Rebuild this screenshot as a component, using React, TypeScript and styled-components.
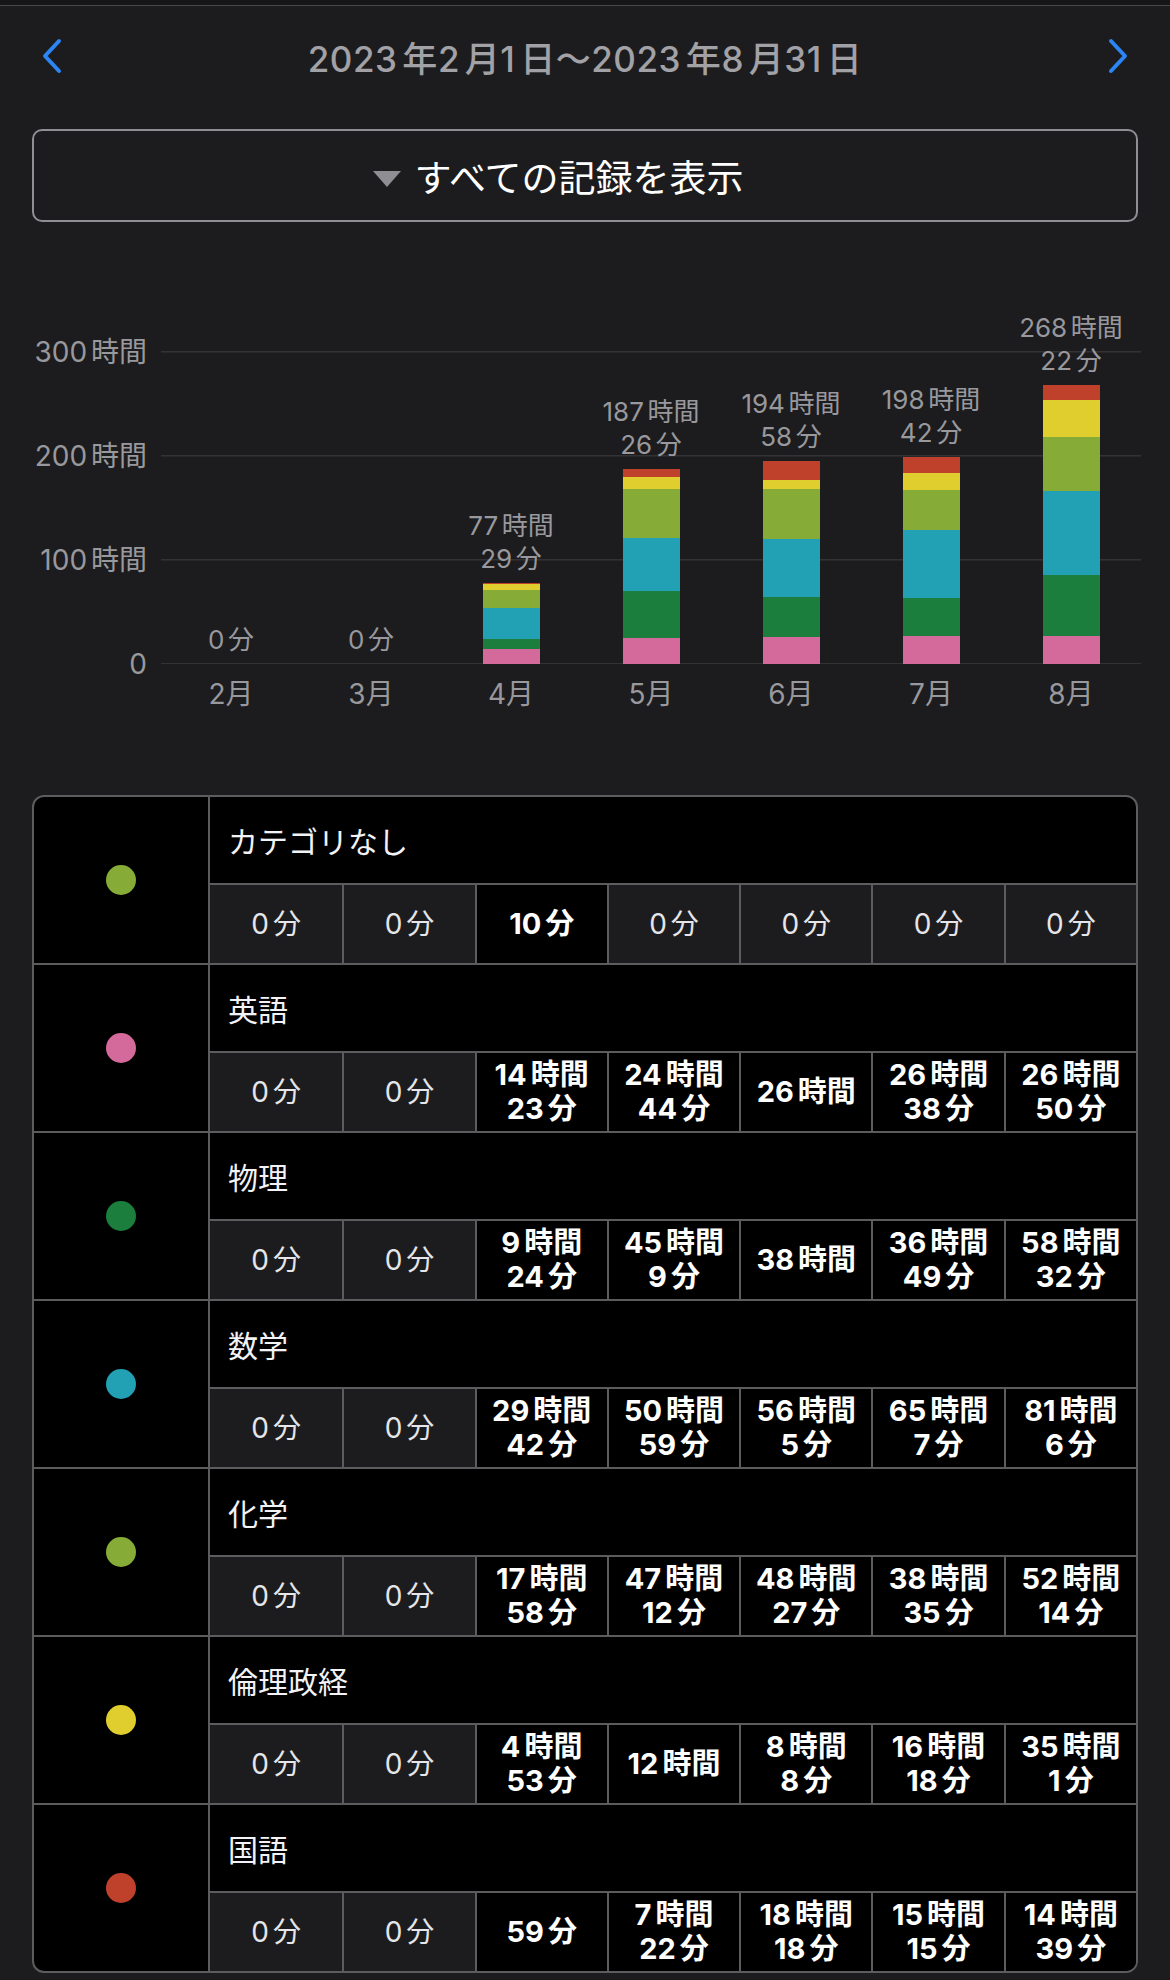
import React from "react";
import styled, { createGlobalStyle } from "styled-components";

const GlobalStyle = createGlobalStyle`
  body {
    margin: 0;
    background: #1c1c1e;
    font-family: Inter, "Noto Sans CJK JP", "Noto Sans", sans-serif;
    -webkit-font-smoothing: antialiased;
  }
`;

type Category = { name: string; color: string; values: number[] };

const hm = (h: number, m: number) => h * 60 + m;

const categories: Category[] = [
  { name: "カテゴリなし", color: "#86ab37", values: [0, 0, 10, 0, 0, 0, 0] },
  { name: "英語", color: "#d4699b", values: [0, 0, hm(14, 23), hm(24, 44), hm(26, 0), hm(26, 38), hm(26, 50)] },
  { name: "物理", color: "#1b7e3d", values: [0, 0, hm(9, 24), hm(45, 9), hm(38, 0), hm(36, 49), hm(58, 32)] },
  { name: "数学", color: "#22a0b4", values: [0, 0, hm(29, 42), hm(50, 59), hm(56, 5), hm(65, 7), hm(81, 6)] },
  { name: "化学", color: "#86ab37", values: [0, 0, hm(17, 58), hm(47, 12), hm(48, 27), hm(38, 35), hm(52, 14)] },
  { name: "倫理政経", color: "#dfce2e", values: [0, 0, hm(4, 53), hm(12, 0), hm(8, 8), hm(16, 18), hm(35, 1)] },
  { name: "国語", color: "#c0412b", values: [0, 0, 59, hm(7, 22), hm(18, 18), hm(15, 15), hm(14, 39)] },
];

// bottom to top order in the stacked bars
const stackOrder = ["英語", "物理", "数学", "カテゴリなし", "化学", "倫理政経", "国語"];
const months = ["2月", "3月", "4月", "5月", "6月", "7月", "8月"];
const PX_PER_HOUR = 1.04;

const formatDuration = (min: number): string[] => {
  const h = Math.floor(min / 60);
  const m = min % 60;
  if (h === 0) return [`${m}分`];
  if (m === 0) return [`${h}時間`];
  return [`${h}時間`, `${m}分`];
};

const Unit = styled.span`
  margin-left: 0.14em;
`;

function Spaced({ text }: { text: string }) {
  const parts = text.match(/\d+|\D+/g) ?? [];
  return (
    <>
      {parts.map((p, i) =>
        /\d/.test(p) || i === 0 ? <span key={i}>{p}</span> : <Unit key={i}>{p}</Unit>
      )}
    </>
  );
}

const Page = styled.div`
  width: 1170px;
  min-height: 1980px;
  background: #1c1c1e;
`;

const TopStrip = styled.div`
  height: 5px;
  background: #161618;
  border-bottom: 1px solid #48484a;
`;

const Header = styled.div`
  height: 100px;
  display: flex;
  align-items: center;
  justify-content: space-between;
  padding: 0 40px;
`;

const Title = styled.div`
  font-size: 35px;
  font-weight: 500;
  color: #a1a1a6;
  letter-spacing: 0.5px;
`;

const NavButton = styled.button`
  background: none;
  border: none;
  padding: 0;
  width: 24px;
  height: 38px;
  display: flex;
  align-items: center;
  justify-content: center;
  cursor: pointer;
`;

const FilterButton = styled.button`
  box-sizing: border-box;
  margin: 23px 32px 0;
  width: 1106px;
  height: 93px;
  border: 2px solid #8e8e93;
  border-radius: 10px;
  background: transparent;
  display: flex;
  align-items: center;
  justify-content: center;
  gap: 14px;
  padding: 0 54px 0 0;
  font-family: inherit;
  font-size: 37px;
  color: #ffffff;
  cursor: pointer;
`;

const Triangle = styled.span`
  width: 0;
  height: 0;
  border-left: 14px solid transparent;
  border-right: 14px solid transparent;
  border-top: 16px solid #8e8e93;
  margin-top: 6px;
`;

const Chart = styled.div`
  margin-top: 48px;
`;

const ChartRow = styled.div`
  display: flex;
`;

const YAxis = styled.div`
  box-sizing: border-box;
  width: 161px;
  padding-right: 14px;
  height: 340px;
  align-self: flex-end;
  margin-bottom: -14px;
  display: flex;
  flex-direction: column;
  justify-content: space-between;
  align-items: flex-end;
`;

const AxisLabel = styled.div`
  font-size: 28px;
  line-height: 28px;
  color: #98989d;
`;

const grid = "linear-gradient(#333335, #333335)";

const Plot = styled.div`
  width: 980px;
  height: 394px;
  display: flex;
  align-items: stretch;
  background-image: ${grid}, ${grid}, ${grid}, ${grid};
  background-repeat: no-repeat;
  background-size: 100% 1.5px;
  background-position: 0 100%, 0 calc(100% - 104px), 0 calc(100% - 208px),
    0 calc(100% - 312px);
`;

const Column = styled.div`
  flex: 1;
  display: flex;
  flex-direction: column;
  align-items: center;
  justify-content: flex-end;
`;

const ValueLabel = styled.div`
  font-size: 26px;
  line-height: 33px;
  color: #98989d;
  text-align: center;
  margin-bottom: 8px;
`;

const Bar = styled.div`
  width: 57px;
  display: flex;
  flex-direction: column-reverse;
`;

const Segment = styled.div<{ $color: string }>`
  background: ${(p) => p.$color};
  flex: none;
`;

const MonthRow = styled.div`
  display: flex;
  margin: 10px 0 0 161px;
  width: 980px;
`;

const MonthLabel = styled.div`
  flex: 1;
  text-align: center;
  font-size: 28px;
  line-height: 40px;
  color: #98989d;
`;

const Table = styled.div`
  box-sizing: border-box;
  margin: 81px 32px 0;
  width: 1106px;
  border: 2px solid #5c5c5e;
  border-radius: 12px;
  background: #000000;
  overflow: hidden;
`;

const Block = styled.div`
  display: flex;
  border-bottom: 2px solid #5c5c5e;

  &:last-child {
    border-bottom: none;
  }
`;

const DotCell = styled.div`
  width: 174px;
  flex: none;
  border-right: 2px solid #5c5c5e;
  display: flex;
  align-items: center;
  justify-content: center;
`;

const Dot = styled.span<{ $color: string }>`
  width: 30px;
  height: 30px;
  border-radius: 50%;
  background: ${(p) => p.$color};
`;

const BlockBody = styled.div`
  flex: 1;
  display: flex;
  flex-direction: column;
`;

const NameRow = styled.div`
  height: 86px;
  display: flex;
  align-items: center;
  padding-left: 18px;
  font-size: 30px;
  color: #f2f2f7;
  border-bottom: 2px solid #5c5c5e;
`;

const ValueRow = styled.div`
  height: 78px;
  display: grid;
  grid-template-columns: repeat(7, 1fr);
`;

const ValueCell = styled.div<{ $zero: boolean }>`
  display: flex;
  flex-direction: column;
  align-items: center;
  justify-content: center;
  border-left: 2px solid #5c5c5e;
  background: ${(p) => (p.$zero ? "#1c1c1e" : "#000000")};
  color: ${(p) => (p.$zero ? "#e5e5ea" : "#ffffff")};
  font-weight: ${(p) => (p.$zero ? 400 : 700)};
  font-size: ${(p) => (p.$zero ? "28px" : "29px")};
  line-height: 34px;

  &:first-child {
    border-left: none;
  }
`;

function Chevron({ dir }: { dir: "left" | "right" }) {
  const d = dir === "left" ? "M19 3 L5 18 L19 33" : "M5 3 L19 18 L5 33";
  return (
    <svg width="24" height="36" viewBox="0 0 24 36">
      <path d={d} fill="none" stroke="#2b86f4" strokeWidth="4" strokeLinecap="round" strokeLinejoin="round" />
    </svg>
  );
}

export default function App() {
  const byName = Object.fromEntries(categories.map((c) => [c.name, c]));
  const totals = months.map((_, i) => categories.reduce((s, c) => s + c.values[i], 0));

  return (
    <Page>
      <GlobalStyle />
      <TopStrip />
      <Header>
        <NavButton aria-label="前へ">
          <Chevron dir="left" />
        </NavButton>
        <Title>
          <Spaced text="2023年2月1日〜2023年8月31日" />
        </Title>
        <NavButton aria-label="次へ">
          <Chevron dir="right" />
        </NavButton>
      </Header>

      <FilterButton>
        <Triangle />
        すべての記録を表示
      </FilterButton>

      <Chart>
        <ChartRow>
          <YAxis>
            {["300時間", "200時間", "100時間", "0"].map((l) => (
              <AxisLabel key={l}>
                <Spaced text={l} />
              </AxisLabel>
            ))}
          </YAxis>
          <Plot>
            {months.map((m, i) => (
              <Column key={m}>
                <ValueLabel>
                  {formatDuration(totals[i]).map((line) => (
                    <div key={line}>
                      <Spaced text={line} />
                    </div>
                  ))}
                </ValueLabel>
                <Bar>
                  {stackOrder.map((name) => {
                    const c = byName[name];
                    const h = (c.values[i] / 60) * PX_PER_HOUR;
                    return h > 0 ? (
                      <Segment key={name} $color={c.color} style={{ height: `${h}px` }} />
                    ) : null;
                  })}
                </Bar>
              </Column>
            ))}
          </Plot>
        </ChartRow>
        <MonthRow>
          {months.map((m) => (
            <MonthLabel key={m}>{m}</MonthLabel>
          ))}
        </MonthRow>
      </Chart>

      <Table>
        {categories.map((c) => (
          <Block key={c.name}>
            <DotCell>
              <Dot $color={c.color} />
            </DotCell>
            <BlockBody>
              <NameRow>{c.name}</NameRow>
              <ValueRow>
                {c.values.map((v, i) => (
                  <ValueCell key={i} $zero={v === 0}>
                    {formatDuration(v).map((line) => (
                      <div key={line}>
                        <Spaced text={line} />
                      </div>
                    ))}
                  </ValueCell>
                ))}
              </ValueRow>
            </BlockBody>
          </Block>
        ))}
      </Table>
    </Page>
  );
}
